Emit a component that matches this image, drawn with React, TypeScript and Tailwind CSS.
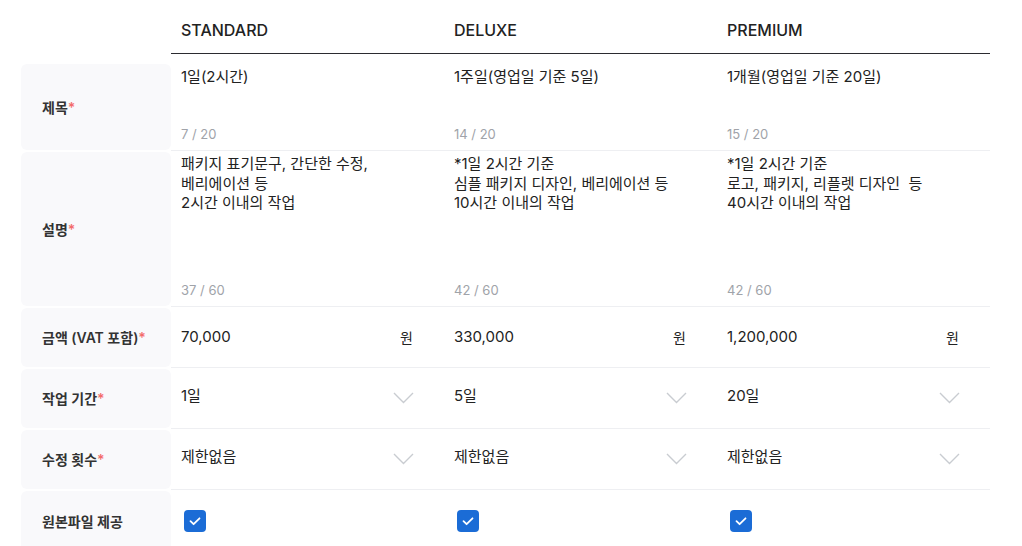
import React from 'react';

interface Plan {
     name: string;
     title: string;
     titleCount: string;
     desc: string[];
     descCount: string;
     price: string;
     period: string;
     revisions: string;
}

const plans: Plan[] = [
     {
          name: 'STANDARD',
          title: '1일(2시간)',
          titleCount: '7 / 20',
          desc: ['패키지 표기문구, 간단한 수정,', '베리에이션 등', '2시간 이내의 작업'],
          descCount: '37 / 60',
          price: '70,000',
          period: '1일',
          revisions: '제한없음',
     },
     {
          name: 'DELUXE',
          title: '1주일(영업일 기준 5일)',
          titleCount: '14 / 20',
          desc: ['*1일 2시간 기준', '심플 패키지 디자인, 베리에이션 등', '10시간 이내의 작업'],
          descCount: '42 / 60',
          price: '330,000',
          period: '5일',
          revisions: '제한없음',
     },
     {
          name: 'PREMIUM',
          title: '1개월(영업일 기준 20일)',
          titleCount: '15 / 20',
          desc: ['*1일 2시간 기준', '로고, 패키지, 리플렛 디자인  등', '40시간 이내의 작업'],
          descCount: '42 / 60',
          price: '1,200,000',
          period: '20일',
          revisions: '제한없음',
     },
];

const Chevron = () => (
     <svg width="21" height="12" viewBox="0 0 21 12" fill="none">
          <path d="M1 1L10.5 10.5L20 1" stroke="#c9ccd1" strokeWidth="1.4" />
     </svg>
);

const Checkbox = () => (
     <div className="w-[22px] h-[22px] rounded-[4px] bg-[#1b6cd6] flex items-center justify-center">
          <svg width="22" height="22" viewBox="0 0 22 22" fill="none">
               <path d="M6.5 11.2L9.6 14.2L15.5 8.3" stroke="white" strokeWidth="1.8" strokeLinecap="round" strokeLinejoin="round" />
          </svg>
     </div>
);

const Label = ({ text, required }: { text: string; required?: boolean }) => (
     <div className="w-[150px] shrink-0 py-[1px] flex">
          <div className="flex-1 bg-[#f9f9fb] rounded-md flex items-center pl-[21px] text-[14px] font-semibold text-[#333]">
               {text}
               {required && <span className="text-[#f36b6b]">*</span>}
          </div>
     </div>
);

const Row = ({
     label,
     required,
     height,
     border = true,
     render,
}: {
     label: string;
     required?: boolean;
     height: string;
     border?: boolean;
     render: (plan: Plan) => React.ReactNode;
}) => (
     <div className={`flex ${height}`}>
          <Label text={label} required={required} />
          <div className={`flex flex-1 ${border ? 'border-b border-[#eeeff2]' : ''}`}>
               {plans.map((plan) => (
                    <div key={plan.name} className="w-[273px] shrink-0 flex">
                         {render(plan)}
                    </div>
               ))}
          </div>
     </div>
);

export default function App() {
     return (
          <div
               className="w-[1022px] h-[546px] overflow-hidden bg-white pl-[21px] text-[#222]"
               style={{ fontFamily: 'Inter, "Noto Sans CJK KR", sans-serif' }}
          >
               {/* Header */}
               <div className="flex h-[54px]">
                    <div className="w-[150px] shrink-0" />
                    <div className="flex border-b border-[#2b2b30]">
                         {plans.map((plan) => (
                              <div key={plan.name} className="w-[273px] pl-[10px] pt-[18px] text-[16px] leading-[24px] font-medium">
                                   {plan.name}
                              </div>
                         ))}
                    </div>
               </div>

               <div className="mt-[9px] w-[969px]">
                    <Row
                         label="제목"
                         required
                         height="h-[88px]"
                         render={(plan) => (
                              <div className="flex flex-col justify-between flex-1 pl-[10px] pt-[4px] pb-[6px]">
                                   <div className="text-[15px] leading-[20px]">{plan.title}</div>
                                   <div className="text-[13px] leading-[20px] text-[#a0a3a9]">{plan.titleCount}</div>
                              </div>
                         )}
                    />
                    <Row
                         label="설명"
                         required
                         height="h-[156px]"
                         render={(plan) => (
                              <div className="flex flex-col justify-between flex-1 pl-[10px] pt-[3px] pb-[6px]">
                                   <div className="text-[15px] leading-[19.5px] whitespace-pre">
                                        {plan.desc.map((line) => (
                                             <div key={line}>{line}</div>
                                        ))}
                                   </div>
                                   <div className="text-[13px] leading-[20px] text-[#a0a3a9]">{plan.descCount}</div>
                              </div>
                         )}
                    />
                    <Row
                         label="금액 (VAT 포함)"
                         required
                         height="h-[61px]"
                         render={(plan) => (
                              <div className="flex items-center justify-between flex-1 pl-[10px] pr-[31px] text-[15px]">
                                   <span>{plan.price}</span>
                                   <span className="text-[14px]">원</span>
                              </div>
                         )}
                    />
                    <Row
                         label="작업 기간"
                         required
                         height="h-[61px]"
                         render={(plan) => (
                              <div className="flex items-center justify-between flex-1 pl-[10px] pr-[30px] text-[15px]">
                                   <span className="-mt-[3px]">{plan.period}</span>
                                   <Chevron />
                              </div>
                         )}
                    />
                    <Row
                         label="수정 횟수"
                         required
                         height="h-[61px]"
                         render={(plan) => (
                              <div className="flex items-center justify-between flex-1 pl-[10px] pr-[30px] text-[15px]">
                                   <span className="-mt-[3px]">{plan.revisions}</span>
                                   <Chevron />
                              </div>
                         )}
                    />
                    <Row
                         label="원본파일 제공"
                         height="h-[62px]"
                         border={false}
                         render={() => (
                              <div className="flex items-center flex-1 pl-[13px]">
                                   <Checkbox />
                              </div>
                         )}
                    />
               </div>
          </div>
     );
}
